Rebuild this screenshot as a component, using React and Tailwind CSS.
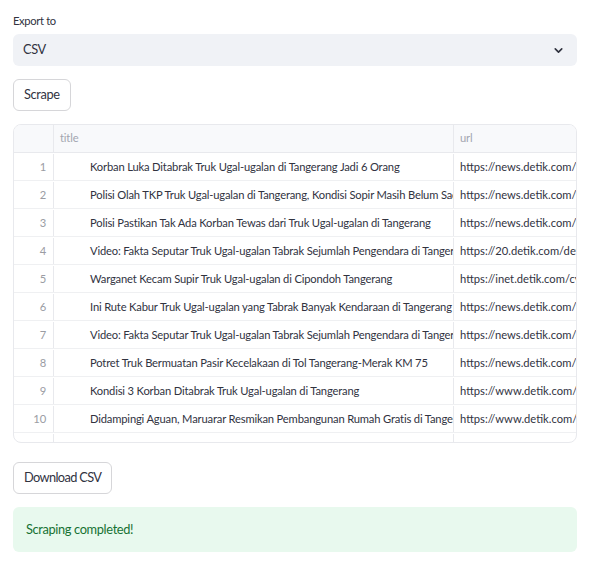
import { ChevronDown } from 'lucide-react';

const rows = [
  ['Korban Luka Ditabrak Truk Ugal-ugalan di Tangerang Jadi 6 Orang', 'https://news.detik.com/berita/d-7512345/korban-luka'],
  ['Polisi Olah TKP Truk Ugal-ugalan di Tangerang, Kondisi Sopir Masih Belum Sadar', 'https://news.detik.com/berita/d-7512346/polisi-olah-tkp'],
  ['Polisi Pastikan Tak Ada Korban Tewas dari Truk Ugal-ugalan di Tangerang', 'https://news.detik.com/berita/d-7512347/polisi-pastikan'],
  ['Video: Fakta Seputar Truk Ugal-ugalan Tabrak Sejumlah Pengendara di Tangerang', 'https://20.detik.com/detikupdate/20241112-241112001/video'],
  ['Warganet Kecam Supir Truk Ugal-ugalan di Cipondoh Tangerang', 'https://inet.detik.com/cyberlife/d-7512348/warganet-kecam'],
  ['Ini Rute Kabur Truk Ugal-ugalan yang Tabrak Banyak Kendaraan di Tangerang', 'https://news.detik.com/berita/d-7512349/ini-rute-kabur'],
  ['Video: Fakta Seputar Truk Ugal-ugalan Tabrak Sejumlah Pengendara di Tangerang', 'https://news.detik.com/detiktv/d-7512350/video-fakta'],
  ['Potret Truk Bermuatan Pasir Kecelakaan di Tol Tangerang-Merak KM 75', 'https://news.detik.com/foto-news/d-7512351/potret-truk'],
  ['Kondisi 3 Korban Ditabrak Truk Ugal-ugalan di Tangerang', 'https://www.detik.com/jabodetabek/berita/d-7512352/kondisi'],
  ['Didampingi Aguan, Maruarar Resmikan Pembangunan Rumah Gratis di Tangerang', 'https://www.detik.com/properti/berita/d-7512353/didampingi'],
  ['Kronologi Lengkap Truk Ugal-ugalan Tabrak Belasan Kendaraan di Tangerang', 'https://news.detik.com/berita/d-7512354/kronologi'],
];

export default function App() {
  return (
    <div className="min-h-[566px] bg-white pl-[13px] pr-[15px] pt-[12px] font-['Lato',sans-serif] tracking-[-0.022em] text-[#31333f]">
      <div className="h-[18px] text-[11.2px] leading-[18px]">Export to</div>

      <div className="mt-[4px] flex h-[32px] items-center justify-between rounded-[6px] bg-[#f0f2f6] pl-[10px] pr-[12px] text-[12.8px]">
        <span>CSV</span>
        <ChevronDown className="h-[13px] w-[13px] text-[#31333f]" strokeWidth={3} />
      </div>

      <button className="mt-[13px] flex h-[32px] items-center rounded-[6px] border border-[#d6d6d9] bg-white px-[10px] text-[12.8px]">
        Scrape
      </button>

      <div className="mt-[13px] h-[319px] overflow-hidden rounded-[8px] border border-[#e8e9ed] text-[11.2px] tracking-[-0.015em]">
        <div className="flex h-[28px] border-b border-[#e8e9ed] bg-[#f8f9fb] text-[#a3a6b0]">
          <div className="w-[40px] shrink-0 border-r border-[#e8e9ed]" />
          <div className="flex w-[400px] shrink-0 items-center border-r border-[#e8e9ed] pl-[6px]">title</div>
          <div className="flex min-w-0 flex-1 items-center pl-[6px]">url</div>
        </div>
        {rows.map(([title, url], i) => (
          <div key={i} className="flex h-[28px] border-b border-[#eff0f2] pt-[1px]">
            <div className="flex w-[40px] shrink-0 items-center justify-end border-r border-[#e8e9ed] pr-[7px] text-[#9a9ca3]">
              {i + 1}
            </div>
            <div className="flex w-[400px] shrink-0 items-center overflow-hidden whitespace-nowrap border-r border-[#e8e9ed] pl-[36px]">
              {title}
            </div>
            <div className="flex min-w-0 flex-1 items-center overflow-hidden whitespace-nowrap pl-[6px] tracking-[0em]">{url}</div>
          </div>
        ))}
      </div>

      <button className="mt-[19px] flex h-[32px] items-center rounded-[6px] border border-[#d6d6d9] bg-white px-[10px] text-[12.8px] tracking-[-0.05em]">
        Download CSV
      </button>

      <div className="mt-[13px] flex h-[45px] items-center rounded-[6px] bg-[#e8f9ee] px-[13px] text-[12.8px] text-[#177233]">
        Scraping completed!
      </div>
    </div>
  );
}
